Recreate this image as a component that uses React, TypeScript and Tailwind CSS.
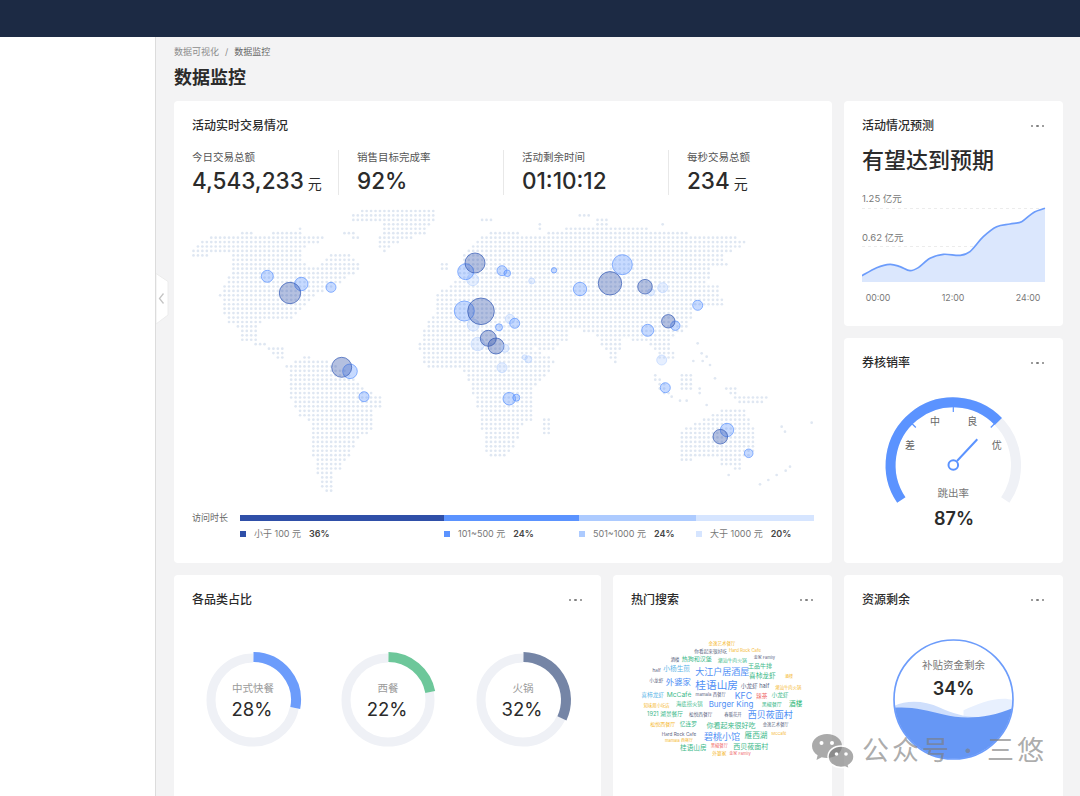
import React from "react";

type Pt = [number, number];

// land outlines, taken from crops at 3x. x/3 + 490, y/3 + 205 gives the page position
const shift = (pts: Pt[]): Pt[] => pts.map(([x, y]) => [x - 930, y]);
const land: Pt[][] = [
  shift([[32, 138], [60, 115], [95, 88], [215, 83], [240, 88], [295, 83], [345, 72], [362, 70], [372, 88], [432, 86], [425, 112], [375, 125], [365, 165], [390, 190], [420, 178], [445, 155], [470, 138], [512, 152], [538, 180], [532, 200], [480, 235], [410, 272], [378, 300], [340, 342], [240, 352], [232, 400], [248, 415], [312, 430], [310, 472], [290, 458], [250, 428], [185, 408], [168, 352], [143, 352], [128, 312], [118, 270], [140, 230], [155, 200], [155, 150], [100, 146], [50, 160], [32, 148]]),
  shift([[515, 32], [545, 16], [762, 16], [762, 50], [735, 85], [680, 103], [630, 125], [610, 142], [595, 125], [605, 50], [560, 50], [515, 47]]),
  shift([[475, 72], [510, 72], [538, 88], [538, 105], [500, 112], [490, 115], [515, 95], [475, 80]]),
  shift([[318, 482], [370, 453], [440, 465], [500, 500], [560, 558], [602, 572], [604, 603], [578, 622], [578, 682], [535, 692], [530, 722], [490, 782], [460, 810], [458, 850], [466, 878], [430, 855], [408, 800], [393, 710], [393, 650], [358, 632], [328, 570], [330, 510]]),
  [[-215, 430], [-200, 375], [-162, 312], [-162, 268], [-130, 245], [-110, 240], [-90, 180], [-70, 130], [-30, 100], [0, 82], [80, 82], [100, 95], [170, 85], [230, 70], [275, 60], [360, 55], [360, 70], [470, 70], [540, 80], [742, 95], [772, 110], [750, 132], [700, 150], [722, 187], [660, 190], [668, 222], [635, 240], [692, 240], [697, 302], [610, 300], [600, 362], [570, 387], [540, 400], [556, 460], [530, 472], [500, 452], [488, 420], [460, 410], [400, 402], [376, 477], [345, 437], [320, 390], [242, 370], [242, 402], [170, 442], [125, 420], [145, 440], [200, 465], [170, 512], [125, 560], [137, 642], [100, 650], [92, 690], [72, 732], [42, 762], [-6, 764], [-20, 700], [-30, 640], [-57, 545], [-82, 497], [-192, 492]],
  [[153, 652], [186, 622], [186, 670], [176, 697], [153, 697]],
  [[488, 505], [520, 525], [548, 578], [520, 565], [488, 525]],
  [[566, 510], [612, 503], [612, 552], [566, 552]],
  [[618, 545], [640, 540], [640, 565], [618, 565]],
  [[700, 545], [748, 545], [748, 565], [835, 575], [812, 606], [740, 590]],
  [[566, 682], [660, 630], [715, 608], [772, 612], [778, 650], [802, 690], [802, 735], [750, 772], [750, 792], [700, 788], [680, 752], [600, 766], [566, 764]],
  [[265, 28], [296, 28], [296, 40], [265, 40]],
  [[315, 40], [362, 40], [362, 60], [315, 60]],
  [[142, 55], [162, 55], [162, 78], [142, 78]],
  [[-30, 40], [15, 30], [15, 52], [-30, 52]],
  shift([[778, 175], [802, 172], [805, 197], [780, 197]]),
];
const strayDots: Pt[] = [[810, 838], [835, 825], [860, 810], [887, 797], [900, 785], [965, 653], [875, 665], [885, 680], [716, 810], [650, 600], [623, 415], [635, 445], [650, 455], [660, 480], [610, 468], [638, 468], [518, 58], [675, 520], [570, 587], [590, 587], [545, 575]];

const inside = ([x, y]: Pt, poly: Pt[]) => {
  let hit = false;
  for (let i = 0, j = poly.length - 1; i < poly.length; j = i++) {
    const [xi, yi] = poly[i];
    const [xj, yj] = poly[j];
    if (yi > y !== yj > y && x < ((xj - xi) * (y - yi)) / (yj - yi) + xi) hit = !hit;
  }
  return hit;
};

const mapDots: Pt[] = [];
for (let row = 0; row < 66; row++) {
  for (let col = 0; col < 140; col++) {
    const px = 193.5 + col * 4.44;
    const py = 211 + row * 4.44;
    const p: Pt = [(px - 490) * 3, (py - 205) * 3];
    if (land.some((poly) => inside(p, poly))) mapDots.push([px, py]);
  }
}
strayDots.forEach(([x, y]) => mapDots.push([490 + x / 3, 205 + y / 3]));

type Bubble = [number, number, number, "d" | "m" | "l"];
const bubbles: Bubble[] = [
  [267.3, 276.3, 6, "m"], [301.3, 284, 6.7, "m"], [290, 293, 10.7, "d"], [331, 287.3, 5, "m"],
  [350, 371.3, 7.3, "m"], [341.7, 367.3, 10, "d"], [364, 396.7, 5, "m"], [472.7, 279.7, 6, "l"],
  [465.7, 271.7, 8, "m"], [475, 263, 10, "d"], [464.3, 311, 10, "m"], [473.3, 325, 6, "l"],
  [481, 311.3, 13.3, "d"], [477.7, 344, 6.7, "l"], [488.3, 338.3, 8, "d"], [496, 346, 8, "d"],
  [502, 270.7, 5, "m"], [507.3, 273.3, 3.3, "m"], [554, 270.3, 2.7, "m"], [531.7, 281, 3, "l"],
  [622.3, 264.7, 10, "m"], [610, 283.3, 11.7, "d"], [580, 289, 6.7, "m"], [651, 292.3, 3.5, "l"],
  [645, 286.7, 7.3, "d"], [662.7, 287.7, 5, "l"], [697.7, 305.3, 5, "m"], [675.3, 325.7, 4.7, "m"],
  [668.3, 321.3, 6.7, "d"], [647.7, 330.3, 6, "m"], [510, 319, 4.7, "l"], [514.7, 323.3, 5, "m"],
  [499, 327.3, 3.5, "m"], [505, 348.3, 4, "l"], [502, 367.7, 5, "l"], [528.3, 359.3, 3.5, "l"],
  [524.7, 357.3, 2.5, "l"], [661.7, 360, 5, "l"], [665.3, 387.7, 5, "m"], [509.3, 398.7, 6.3, "m"],
  [516.3, 397.7, 3.5, "m"], [727, 430, 6.7, "m"], [720.3, 436.7, 7.3, "d"], [748.7, 453.3, 4.3, "m"],
];

const bubbleStyle = {
  d: { fill: "#2f4fa8", fillOpacity: 0.36, stroke: "#3a5fb8", strokeOpacity: 0.75 },
  m: { fill: "#5b93ff", fillOpacity: 0.34, stroke: "#5b93ff", strokeOpacity: 0.7 },
  l: { fill: "#adcbff", fillOpacity: 0.3, stroke: "#adcbff", strokeOpacity: 0.5 },
};

const BLUE = "#4f8ff5";
const GREEN = "#3cb98a";
const GRAY = "#5a6480";
const AMBER = "#f5b82e";
const RED = "#ef6a6a";
type Word = [string, number, number, number, string];
const words: Word[] = [
  ["金逸艺术餐厅", 276, 40, 13.5, AMBER], ["你看起来很好吃", 242, 62, 14, GRAY], ["Hard Rock Cafe", 345, 62, 13, AMBER],
  ["热狗和汉堡", 200, 85, 18, GREEN], ["酒楼", 135, 87, 13, GRAY], ["潮汕牛肉火锅", 307, 90, 14.5, GREEN],
  ["金家 Family", 403, 83, 12, GRAY], ["王品牛排", 390, 107, 18, GREEN], ["half", 80, 120, 14, GRAY],
  ["小杨生煎", 140, 118, 20, "#5bb5e8"], ["大江户居酒屋", 277, 123, 27, BLUE], ["喜柿龙虾", 397, 139, 20, GREEN],
  ["酒楼", 477, 140, 12, AMBER], ["小龙虾", 79, 150, 14, GRAY], ["外婆家", 145, 155, 25, BLUE],
  ["桂语山房", 260, 165, 32, BLUE], ["小龙虾 half", 375, 167, 17, GRAY], ["潮汕牛肉火锅", 475, 172, 13, AMBER],
  ["喜柿龙虾", 68, 194, 17, "#5bb5e8"], ["McCafé", 147, 194, 20, GREEN], ["mamala 西餐厅", 242, 193, 13, GRAY],
  ["KFC", 340, 197, 26, BLUE], ["辣茶", 395, 197, 17, RED], ["小龙虾", 450, 195, 17, GREEN],
  ["知味观小吃店", 80, 226, 13, AMBER], ["海底捞火锅", 178, 223, 16, GREEN], ["Burger King", 303, 223, 24, BLUE],
  ["黑椒餐厅", 425, 223, 15, GREEN], ["酒楼", 497, 223, 20, "#22b573"], ["1921 湖景餐厅", 105, 253, 17, GREEN],
  ["松悦西餐厅", 212, 252, 14, GRAY], ["春暖花开", 309, 252, 13, GRAY], ["西贝莜面村", 421, 253, 27, BLUE],
  ["松悦西餐厅", 98, 281, 15, AMBER], ["忆连罗", 175, 282, 17, GREEN], ["你看起来很好吃", 303, 286, 21, GREEN],
  ["金逸艺术餐厅", 437, 284, 13, GRAY], ["Hard Rock Cafe", 147, 313, 14, GRAY], ["McCafé", 447, 309, 12, AMBER],
  ["mamala 西餐厅", 147, 331, 12, AMBER], ["碧桃小馆", 276, 318, 27, BLUE], ["雁西湖", 378, 315, 23, GREEN],
  ["桂语山房", 190, 355, 20, GREEN], ["黑椒餐厅", 268, 345, 13, RED], ["西贝莜面村", 362, 349, 21, GREEN],
  ["外婆家", 268, 369, 14, AMBER], ["金家 Family", 330, 369, 12, RED],
];

const curve: Pt[] = [[66, 527], [110, 503], [150, 493], [180, 500], [210, 512], [235, 503], [270, 475], [310, 463], [360, 466], [390, 455], [430, 410], [470, 380], [510, 372], [545, 365], [580, 338], [615, 325]];
const smooth = (pts: Pt[]) => {
  let d = `M${pts[0][0]} ${pts[0][1]}`;
  for (let i = 0; i < pts.length - 1; i++) {
    const p0 = pts[i - 1] || pts[i];
    const p1 = pts[i];
    const p2 = pts[i + 1];
    const p3 = pts[i + 2] || p2;
    d += `C${p1[0] + (p2[0] - p0[0]) / 6} ${p1[1] + (p2[1] - p0[1]) / 6} ${p2[0] - (p3[0] - p1[0]) / 6} ${p2[1] - (p3[1] - p1[1]) / 6} ${p2[0]} ${p2[1]}`;
  }
  return d;
};

// deg is clockwise from twelve o'clock
const polar = (cx: number, cy: number, r: number, deg: number): Pt => {
  const a = ((deg - 90) * Math.PI) / 180;
  return [cx + r * Math.cos(a), cy + r * Math.sin(a)];
};
const arc = (cx: number, cy: number, r: number, from: number, to: number) => {
  const [x1, y1] = polar(cx, cy, r, from);
  const [x2, y2] = polar(cx, cy, r, to);
  return `M${x1} ${y1}A${r} ${r} 0 ${to - from > 180 ? 1 : 0} 1 ${x2} ${y2}`;
};

const Dots = () => (
  <div className="flex gap-[3px] mr-[1px]">
    <span className="w-[2.5px] h-[2.5px] rounded-full bg-[#7f7f7f]" />
    <span className="w-[2.5px] h-[2.5px] rounded-full bg-[#7f7f7f]" />
    <span className="w-[2.5px] h-[2.5px] rounded-full bg-[#7f7f7f]" />
  </div>
);

const CardHead = ({ title, more = true }: { title: string; more?: boolean }) => (
  <div className="flex items-center justify-between h-[18px]">
    <h3 className="text-[12px] leading-[18px] font-medium text-[#2b2b2b]">{title}</h3>
    {more && <Dots />}
  </div>
);

const Stat = ({ label, value, unit, last }: { label: string; value: string; unit?: string; last?: boolean }) => (
  <div className={last ? "w-[127px] h-[45px]" : "w-[147px] h-[45px] mr-[18px] border-r border-[#e8e8e8]"}>
    <div className="mt-[1px] text-[10.5px] leading-[14px] text-[#555]">{label}</div>
    <div className="flex items-baseline mt-[1px] leading-[30px] text-[#2b2b2b]">
      <span className="text-[22.5px] font-medium">{value}</span>
      {unit && <span className="text-[14px] ml-[4px]">{unit}</span>}
    </div>
  </div>
);

const legend = [
  { label: "小于 100 元", pct: "36%", color: "bg-[#2f4fa8]", w: "w-[204px]" },
  { label: "101~500 元", pct: "24%", color: "bg-[#5b93ff]", w: "w-[135px]" },
  { label: "501~1000 元", pct: "24%", color: "bg-[#adcbff]", w: "w-[117px]" },
  { label: "大于 1000 元", pct: "20%", color: "bg-[#d6e5ff]", w: "w-[118px]" },
];

const Donut = ({ label, pct, color }: { label: string; pct: number; color: string }) => (
  <svg width="100" height="100" viewBox="0 0 100 100">
    <circle cx="50" cy="50" r="42" fill="none" stroke="#eff1f6" strokeWidth="9" />
    <path d={arc(50, 50, 43, 0, (pct * 360) / 100)} fill="none" stroke="#fff" strokeWidth="12" />
    <path d={arc(50, 50, 43, 0.6, (pct * 360) / 100)} fill="none" stroke={color} strokeWidth="10" />
    <text x="50" y="38" textAnchor="middle" dominantBaseline="central" fontSize="10.5" fill="#9a9a9a">{label}</text>
    <text x="49" y="59" textAnchor="middle" dominantBaseline="central" fontSize="18.5" fill="#2b2b2b">{pct}%</text>
  </svg>
);

const App = () => {
  return (
    <div className="relative w-[1080px] h-[796px] overflow-hidden flex flex-col bg-[#f3f3f4] font-['Inter','Noto_Sans_CJK_SC',sans-serif]">
      <header className="h-[37px] shrink-0 bg-[#1c2a44]" />
      <div className="flex flex-1 min-h-0">
        <aside className="w-[156px] shrink-0 bg-white border-r border-[#dcdcdc]" />
        <main className="relative flex-1 pl-[18px] pr-[17px] pt-[8px]">
          {/* collapse handle */}
          <svg className="absolute left-0 top-[236px]" width="13" height="52" viewBox="0 0 13 52">
            <path d="M0 .5 12 8.5V42L0 51Z" fill="#fff" stroke="#ececec" />
            <path d="M7.5 20.5 3.5 25.5 7.5 30.5" fill="none" stroke="#c4c4c4" strokeWidth="1.3" />
          </svg>

          <nav className="flex items-center gap-[6px] h-[14px] text-[9px] leading-[14px] text-[#8c8c8c]">
            <span>数据可视化</span>
            <span>/</span>
            <span className="text-[#666]">数据监控</span>
          </nav>
          <h1 className="mt-[6px] h-[30px] text-[18px] leading-[26px] font-semibold text-[#2b2b2b]">数据监控</h1>

          <div className="flex gap-[12px] mt-[6px] h-[462px]">
            <section className="w-[658px] bg-white rounded-[4px] px-[18px] pt-[16px]">
              <CardHead title="活动实时交易情况" more={false} />
              <div className="flex mt-[15px]">
                <Stat label="今日交易总额" value="4,543,233" unit="元" />
                <Stat label="销售目标完成率" value="92%" />
                <Stat label="活动剩余时间" value="01:10:12" />
                <Stat label="每秒交易总额" value="234" unit="元" last />
              </div>
              <svg className="mt-[10px] block" width="622" height="295" viewBox="192 205 622 295">
                {mapDots.map(([x, y], i) => (
                  <circle key={i} cx={x} cy={y} r="1.35" fill="#dfe7f2" />
                ))}
                {bubbles.map(([x, y, r, kind], i) => (
                  <circle key={i} cx={x} cy={y} r={r} strokeWidth="1" {...bubbleStyle[kind]} />
                ))}
              </svg>
              <div className="flex items-center mt-[11px] h-[14px]">
                <span className="w-[48px] text-[9px] leading-[14px] text-[#666]">访问时长</span>
                <div className="flex flex-1 h-[6px]">
                  {legend.map((item) => (
                    <div key={item.label} className={`${item.w} ${item.color}`} />
                  ))}
                </div>
              </div>
              <div className="flex pl-[48px] mt-[2px] h-[14px] items-center text-[9px] leading-[14px]">
                {legend.map((item) => (
                  <div key={item.label} className={`${item.w} flex items-center`}>
                    <span className={`w-[6px] h-[6px] ${item.color}`} />
                    <span className="ml-[8px] text-[#777]">{item.label}</span>
                    <span className="ml-[8px] font-semibold text-[#444]">{item.pct}</span>
                  </div>
                ))}
              </div>
            </section>

            <div className="w-[219px] flex flex-col gap-[12px]">
              <section className="h-[225px] bg-white rounded-[4px] px-[18px] pt-[16px]">
                <CardHead title="活动情况预测" />
                <div className="mt-[9px] text-[22px] leading-[32px] font-medium text-[#2b2b2b]">有望达到预期</div>
                <svg className="mt-[13px] block" width="184" height="118" viewBox="0 0 184 118">
                  <g fontSize="9.5" fill="#777">
                    <text x="0" y="13">1.25 亿元</text>
                    <text x="0" y="52">0.62 亿元</text>
                  </g>
                  <path d="M0 19.5H183M0 57.5H183" stroke="#ececec" strokeWidth="1" strokeDasharray="3 3" />
                  <g transform="scale(.3333) translate(-66 -267)">
                    <path d={`${smooth(curve)}L615 546L66 546Z`} fill="#dbe7fd" />
                    <path d={smooth(curve)} fill="none" stroke="#6c9cfb" strokeWidth="5" />
                  </g>
                  <g fontSize="8.8" fill="#777" textAnchor="middle">
                    <text x="16" y="112">00:00</text>
                    <text x="91" y="112">12:00</text>
                    <text x="166" y="112">24:00</text>
                  </g>
                </svg>
              </section>

              <section className="h-[225px] bg-white rounded-[4px] px-[18px] pt-[16px]">
                <CardHead title="券核销率" />
                <svg className="-ml-[18px] mt-[3px] block" width="219" height="175" viewBox="844 375 219 175">
                  <path d={arc(953.3, 465, 62.7, 236, 484)} fill="none" stroke="#eff1f6" strokeWidth="10" />
                  <path d={arc(953.3, 465, 62.7, 236, 406)} fill="none" stroke="#5b93ff" strokeWidth="10" />
                  {[-45, 0, 45].map((d) => {
                    const [x1, y1] = polar(953.3, 465, 53, d);
                    const [x2, y2] = polar(953.3, 465, 58, d);
                    return <line key={d} x1={x1} y1={y1} x2={x2} y2={y2} stroke="#5b93ff" strokeWidth="1.2" />;
                  })}
                  <g fontSize="10" fill="#666" textAnchor="middle" dominantBaseline="central">
                    <text x="935" y="421">中</text>
                    <text x="972.3" y="421">良</text>
                    <text x="910" y="445">差</text>
                    <text x="996.7" y="445">优</text>
                  </g>
                  <line x1="957" y1="461" x2="977.3" y2="439.3" stroke="#5b93ff" strokeWidth="2" />
                  <circle cx="953.3" cy="465" r="4.8" fill="#fff" stroke="#5b93ff" strokeWidth="2" />
                  <text x="953.3" y="493" textAnchor="middle" dominantBaseline="central" fontSize="10.5" fill="#777">跳出率</text>
                  <text x="954" y="518" textAnchor="middle" dominantBaseline="central" fontSize="18" fontWeight="600" fill="#2b2b2b">87%</text>
                </svg>
              </section>
            </div>
          </div>

          <div className="flex gap-[12px] mt-[12px] h-[260px]">
            <section className="w-[427px] bg-white rounded-[4px] px-[18px] pt-[16px]">
              <CardHead title="各品类占比" />
              <div className="flex gap-[34.7px] ml-[11.3px] mt-[41px]">
                <Donut label="中式快餐" pct={28} color="#6c9cfb" />
                <Donut label="西餐" pct={22} color="#6dc79a" />
                <Donut label="火锅" pct={32} color="#7585a6" />
              </div>
            </section>
            <section className="w-[219px] bg-white rounded-[4px] px-[18px] pt-[16px]">
              <CardHead title="热门搜索" />
              <svg className="-ml-[1px] mt-[21px] block" width="200" height="130" viewBox="0 0 600 390">
                <g textAnchor="middle" dominantBaseline="central">
                  {words.map(([text, x, y, size, color], i) => (
                    <text key={i} x={x} y={y} fontSize={size} fill={color}>{text}</text>
                  ))}
                </g>
              </svg>
            </section>
            <section className="w-[219px] bg-white rounded-[4px] px-[18px] pt-[16px]">
              <CardHead title="资源剩余" />
              <svg className="ml-[28px] mt-[27px] block" width="127" height="127" viewBox="270 170 380 380">
                <defs>
                  <clipPath id="tank">
                    <circle cx="460" cy="360" r="177" />
                  </clipPath>
                </defs>
                <g clipPath="url(#tank)">
                  <path d="M490 392C530 375 570 358 610 358C625 358 640 362 650 366V420H490Z" fill="#e8f0fe" />
                  <path d="M280 380C320 362 370 362 420 385C460 403 500 415 540 412V440H280Z" fill="#cfdffc" />
                  <path d="M280 385C330 380 380 392 430 405C490 420 570 418 650 380V560H280Z" fill="#6697f5" />
                </g>
                <circle cx="460" cy="360" r="178" fill="none" stroke="#6c9cfb" strokeWidth="5" />
                <text x="460" y="258" textAnchor="middle" dominantBaseline="central" fontSize="31.5" fill="#777">补贴资金剩余</text>
                <text x="460" y="327" textAnchor="middle" dominantBaseline="central" fontSize="54" fontWeight="600" fill="#2b2b2b">34%</text>
              </svg>
            </section>
          </div>
        </main>
      </div>

      {/* watermark over the page */}
      <div className="absolute left-[811px] top-[733px] flex items-center text-[rgba(125,125,125,0.65)]">
        <svg width="44" height="36" viewBox="0 0 44 36">
          <path d="M16 1C7.700 1 1 6.300 1 13c0 3.800 2.200 7.100 5.600 9.300L5.500 27l5.200-2.700c1.700.4 3.500.7 5.300.7 8.300 0 15-5.400 15-12S24.300 1 16 1Z" fill="currentColor" />
          <path d="M30 13c-7.200 0-13 4.800-13 10.800S22.800 34.500 30 34.500c1.400 0 2.800-.2 4.100-.5l4.400 2-1-3.700c3.300-2 5.500-5 5.500-8.500C43 17.800 37.200 13 30 13Z" fill="currentColor" stroke="#fff" strokeWidth="1.500" />
          <circle cx="10.500" cy="10" r="2" fill="#fff" />
          <circle cx="21" cy="10" r="2" fill="#fff" />
          <circle cx="25.500" cy="21" r="1.800" fill="#fff" />
          <circle cx="35" cy="21" r="1.800" fill="#fff" />
        </svg>
        <div className="ml-[7px] flex text-[27px] leading-[36px] tracking-[3px] whitespace-nowrap">
          <span>公众号</span>
          <span className="w-[35px] text-center font-bold">·</span>
          <span>三悠</span>
        </div>
      </div>
    </div>
  );
};

export default App;
